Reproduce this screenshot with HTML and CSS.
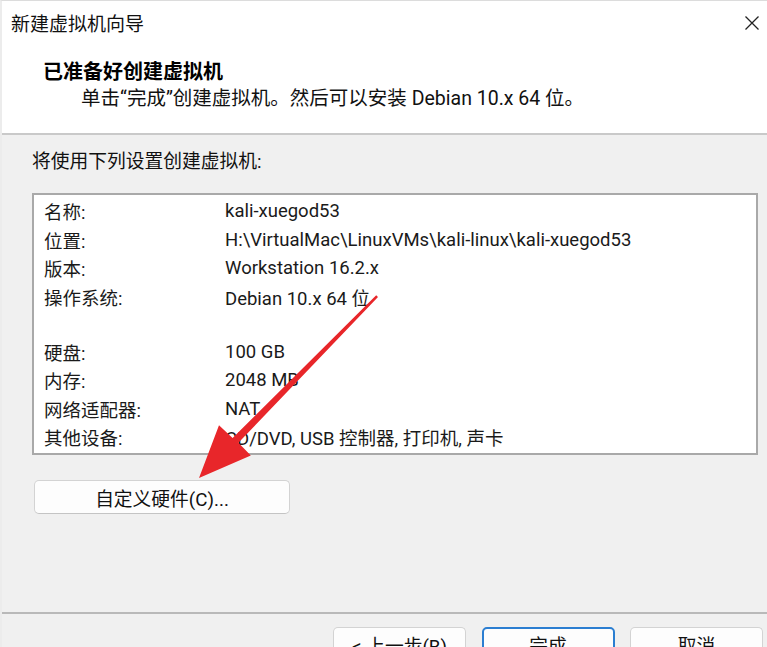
FILE: index.html
```html
<!DOCTYPE html>
<html lang="zh-CN">
<head>
<meta charset="utf-8">
<title>新建虚拟机向导</title>
<link rel="stylesheet" href="styles.css">
</head>
<body>
<div class="dialog">
  <header class="head">
    <div class="titlebar">
      <span class="title">新建虚拟机向导</span>
      <svg class="close" width="16" height="16" viewBox="0 0 16 16"><path d="M1.5 1.5 L14.5 14.5 M14.5 1.5 L1.5 14.5" stroke="#222" stroke-width="1.3" fill="none"/></svg>
    </div>
    <div class="heading">已准备好创建虚拟机</div>
    <div class="sub">单击“完成”创建虚拟机。然后可以安装 Debian 10.x 64 位。</div>
  </header>
  <main class="content">
    <div class="intro">将使用下列设置创建虚拟机:</div>
    <div class="summary">
      <div class="row"><span class="k">名称:</span><span class="v">kali-xuegod53</span></div>
      <div class="row"><span class="k">位置:</span><span class="v">H:\VirtualMac\LinuxVMs\kali-linux\kali-xuegod53</span></div>
      <div class="row"><span class="k">版本:</span><span class="v">Workstation 16.2.x</span></div>
      <div class="row"><span class="k">操作系统:</span><span class="v">Debian 10.x 64 位</span></div>
      <div class="gap"></div>
      <div class="row"><span class="k">硬盘:</span><span class="v">100 GB</span></div>
      <div class="row"><span class="k">内存:</span><span class="v">2048 MB</span></div>
      <div class="row"><span class="k">网络适配器:</span><span class="v">NAT</span></div>
      <div class="row"><span class="k">其他设备:</span><span class="v">CD/DVD, USB 控制器, 打印机, 声卡</span></div>
    </div>
    <button class="btn custom">自定义硬件(C)...</button>
  </main>
  <footer class="foot">
    <button class="btn wiz">&lt; 上一步(B)</button>
    <button class="btn wiz primary">完成</button>
    <button class="btn wiz">取消</button>
  </footer>
  <svg class="arrow" width="767" height="647" viewBox="0 0 767 647">
    <polygon fill="#e8262a" points="376.2,295.3 378.0,297.0 238.4,442.8 250.8,455.6 199,478 219,425.2 232.6,438.0"/>
  </svg>
</div>
</body>
</html>
```
FILE: styles.css
```css
* { box-sizing: border-box; }
html, body {
  margin: 0;
  padding: 0;
}
body {
  width: 767px;
  height: 647px;
  overflow: hidden;
  background: #f0f0f0;
  font-family: Roboto, "Noto Sans CJK SC", sans-serif;
  color: #1a1a1a;
}
.dialog {
  position: relative;
  width: 767px;
  height: 647px;
  display: flex;
  flex-direction: column;
  border-left: 2px solid #ececec;
  border-top: 1px solid #dcdcdc;
}
.head {
  background: #ffffff;
  height: 134px;
  border-bottom: 2px solid #c9c9c9;
  flex: none;
}
.titlebar {
  height: 43px;
  display: flex;
  align-items: center;
  justify-content: space-between;
  padding: 0 7px 0 9px;
}
.title {
  font-size: 19px;
  font-family: "Noto Sans CJK SC", sans-serif;
  color: #111;
}
.close { display: block; margin-top: 1px; }
.heading {
  margin-top: 13px;
  padding-left: 41px;
  font-size: 20px;
  line-height: 28px;
  font-weight: 700;
  font-family: "Noto Sans CJK SC", sans-serif;
  color: #000;
}
.sub {
  padding-left: 79px;
  font-size: 19.5px;
  line-height: 28px;
  color: #111;
}
.content {
  flex: none;
  height: 479px;
  border-bottom: 2px solid #b9b9b9;
  padding: 14px 8px 0 30px;
  display: flex;
  flex-direction: column;
  align-items: flex-start;
}
.intro {
  font-size: 18.75px;
  line-height: 26px;
  color: #111;
}
.summary {
  margin-top: 18px;
  width: 726px;
  height: 262px;
  background: #fff;
  border: 2px solid #a9a9a9;
  padding: 2px 0 0 10px;
}
.row {
  display: flex;
  height: 28.6px;
  align-items: center;
  font-size: 18.5px;
  color: #1a1a1a;
}
.k {
  width: 181px;
  flex: none;
}
.gap { height: 26px; }
.btn {
  font-family: Roboto, "Noto Sans CJK SC", sans-serif;
  background: #fdfdfd;
  border: 1px solid #d3d3d3;
  border-bottom-color: #c4c4c4;
  border-radius: 5px;
  color: #111;
  padding: 0;
}
.custom {
  margin-top: 25px;
  margin-left: 2px;
  width: 256px;
  height: 34px;
  font-size: 18.75px;
}
.foot {
  flex: 1;
  display: flex;
  justify-content: flex-end;
  align-items: flex-start;
  gap: 15.5px;
  padding: 13px 4px 0 0;
}
.wiz {
  width: 133px;
  height: 34px;
  font-size: 18.75px;
}
.wiz.primary {
  border: 2px solid #2b7ed1;
}
.arrow {
  position: absolute;
  left: -2px;
  top: -1px;
  pointer-events: none;
}
```
